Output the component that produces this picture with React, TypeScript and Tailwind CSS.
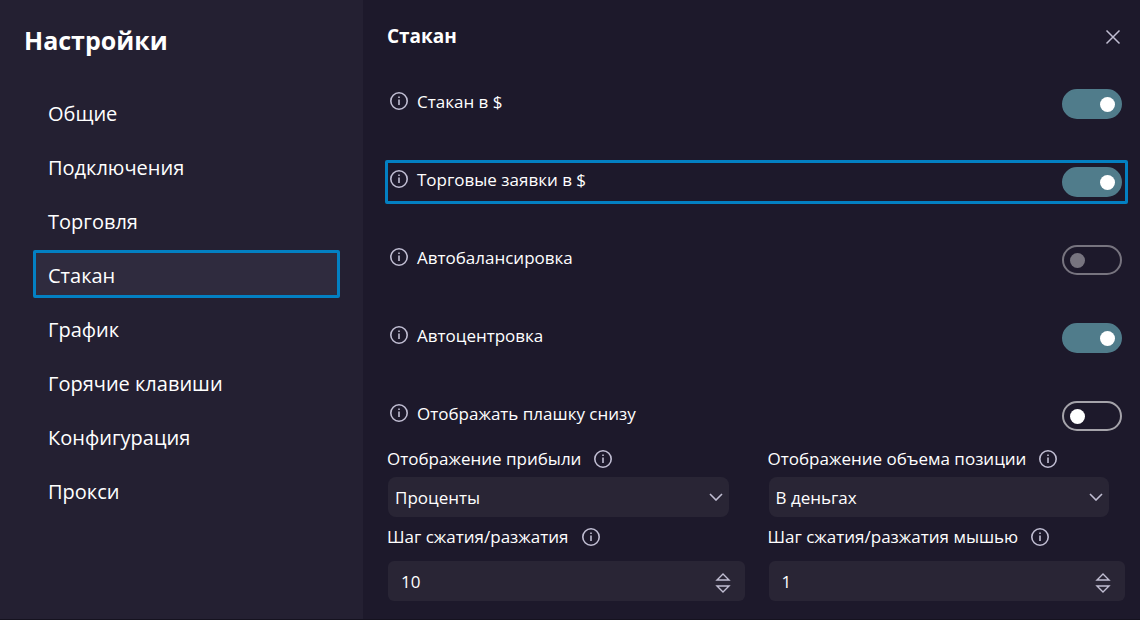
import { useId, useState } from "react";

const sections = [
  "Общие",
  "Подключения",
  "Торговля",
  "Стакан",
  "График",
  "Горячие клавиши",
  "Конфигурация",
  "Прокси",
];

const toggles = [
  { label: "Стакан в $", on: true },
  { label: "Торговые заявки в $", on: true, highlighted: true },
  { label: "Автобалансировка", on: false, disabled: true },
  { label: "Автоцентровка", on: true },
  { label: "Отображать плашку снизу", on: false },
];

function InfoButton({ about }: { about: string }) {
  return (
    <button type="button" aria-label={`Подсказка: ${about}`} className="shrink-0 text-[#c0bdd2]">
      <svg viewBox="0 0 20 20" className="size-5" fill="none" stroke="currentColor">
        <circle cx="10" cy="10" r="8.2" strokeWidth="1.6" />
        <path d="M10 8.5V14" strokeWidth="1.6" />
        <path d="M10 5.5V7" strokeWidth="1.6" />
      </svg>
    </button>
  );
}

type ToggleProps = { label: string; on: boolean; highlighted?: boolean; disabled?: boolean };

function ToggleRow({ label, on, highlighted, disabled }: ToggleProps) {
  const id = useId();
  return (
    <div
      className={
        highlighted
          ? "flex h-11 items-center rounded-xs border-3 border-[#0380c2] pr-[3px]"
          : "flex h-11 items-center rounded-xs border-3 border-transparent pr-[3px]"
      }
    >
      <div className="flex min-w-0 grow items-center gap-2 pb-1.5 pl-px">
        <InfoButton about={label} />
        <label htmlFor={id} className="grow pt-0.5">
          {label}
        </label>
      </div>
      <input
        id={id}
        type="checkbox"
        role="switch"
        defaultChecked={on}
        disabled={disabled}
        className="flex h-[30px] w-15 shrink-0 appearance-none items-center rounded-full border-2 border-[#a5a3aa] px-1.5 before:size-[15px] before:rounded-full before:bg-white before:content-[''] checked:justify-end checked:border-[#507c8b] checked:bg-[#507c8b] checked:px-[5px] disabled:border-[#77747f] disabled:before:bg-[#77747f]"
      />
    </div>
  );
}

function FieldLabel({ id, text }: { id: string; text: string }) {
  return (
    <div className="-ml-px flex h-8 items-center gap-3">
      <label htmlFor={id} className="whitespace-nowrap">
        {text}
      </label>
      <InfoButton about={text} />
    </div>
  );
}

function SelectField({ label, options }: { label: string; options: string[] }) {
  const id = useId();
  return (
    <div>
      <FieldLabel id={id} text={label} />
      <div className="relative mt-0.5 mr-4">
        <select
          id={id}
          className="h-10 w-full appearance-none rounded-lg bg-[#292535] pt-0.5 pr-8 pl-[7px]"
        >
          {options.map((option) => (
            <option key={option}>{option}</option>
          ))}
        </select>
        <svg
          viewBox="0 0 14 8"
          className="pointer-events-none absolute top-4 right-1.5 h-2 w-3.5"
          fill="none"
          stroke="#c0bdd2"
          strokeWidth="1.6"
        >
          <path d="M1 1 7 7 13 1" />
        </svg>
      </div>
    </div>
  );
}

function NumberField({ label, initial }: { label: string; initial: number }) {
  const id = useId();
  const [value, setValue] = useState(initial);
  return (
    <div>
      <FieldLabel id={id} text={label} />
      <div className="mt-2 flex h-10 items-center rounded-md bg-[#292535] pr-3.5 pl-[13px]">
        <input
          id={id}
          type="text"
          inputMode="numeric"
          value={value}
          onChange={(event) => setValue(Number(event.target.value) || 0)}
          className="min-w-0 grow bg-transparent pt-0.5 outline-none"
        />
        <div className="flex flex-col gap-1 pt-1 text-[#c0bdd2]">
          <button type="button" aria-label="Увеличить" onClick={() => setValue(value + 1)}>
            <svg viewBox="0 0 16 8" className="h-2 w-4" fill="none" stroke="currentColor" strokeWidth="1.4">
              <path d="M2 7 8 1 14 7Z" />
            </svg>
          </button>
          <button type="button" aria-label="Уменьшить" onClick={() => setValue(value - 1)}>
            <svg viewBox="0 0 16 8" className="h-2 w-4" fill="none" stroke="currentColor" strokeWidth="1.4">
              <path d="M2 1 8 7 14 1Z" />
            </svg>
          </button>
        </div>
      </div>
    </div>
  );
}

export default function App() {
  const [active, setActive] = useState("Стакан");
  return (
    <div className="flex min-h-screen border-b border-[#15121f] bg-[#1d192b] font-['Open_Sans','Noto_Sans',sans-serif] text-[17px] leading-6 text-white">
      <aside className="w-[363px] shrink-0 bg-[#242032] pr-[23px] pl-6">
        <h1 className="pt-5 text-[25px] leading-10 font-bold">Настройки</h1>
        <nav className="mt-7 flex flex-col gap-1.5 pl-[9px]">
          {sections.map((section) => (
            <a
              key={section}
              href="#"
              onClick={() => setActive(section)}
              aria-current={section === active ? "page" : undefined}
              className={
                section === active
                  ? "flex h-12 items-center rounded-xs border-3 border-[#0380c2] bg-[#2f2b3e] pt-1 pl-3 text-xl"
                  : "flex h-12 items-center rounded-xs border-3 border-transparent pt-1 pl-3 text-xl"
              }
            >
              {section}
            </a>
          ))}
        </nav>
      </aside>
      <main className="min-w-0 grow pt-5 pr-3 pl-[22px]">
        <header className="flex h-8 items-center justify-between pr-1 pl-0.5">
          <h2 className="text-[19px] leading-7 font-bold">Стакан</h2>
          <button type="button" aria-label="Закрыть" className="pt-0.5 text-[#c0bdd2]">
            <svg viewBox="0 0 22 22" className="size-[22px]" fill="none" stroke="currentColor" strokeWidth="1.5">
              <path d="M4.500 4.500 17.500 17.500M17.500 4.500 4.500 17.500" />
            </svg>
          </button>
        </header>
        <div className="mt-[30px] flex flex-col gap-[34px]">
          {toggles.map((toggle) => (
            <ToggleRow key={toggle.label} {...toggle} />
          ))}
        </div>
        <div className="mt-[5px] grid grid-cols-2 gap-x-6 gap-y-1 pr-[3px] pl-[3px]">
          <SelectField label="Отображение прибыли" options={["Проценты", "Деньги"]} />
          <SelectField label="Отображение объема позиции" options={["В деньгах", "В монетах"]} />
          <NumberField label="Шаг сжатия/разжатия" initial={10} />
          <NumberField label="Шаг сжатия/разжатия мышью" initial={1} />
        </div>
      </main>
    </div>
  );
}
